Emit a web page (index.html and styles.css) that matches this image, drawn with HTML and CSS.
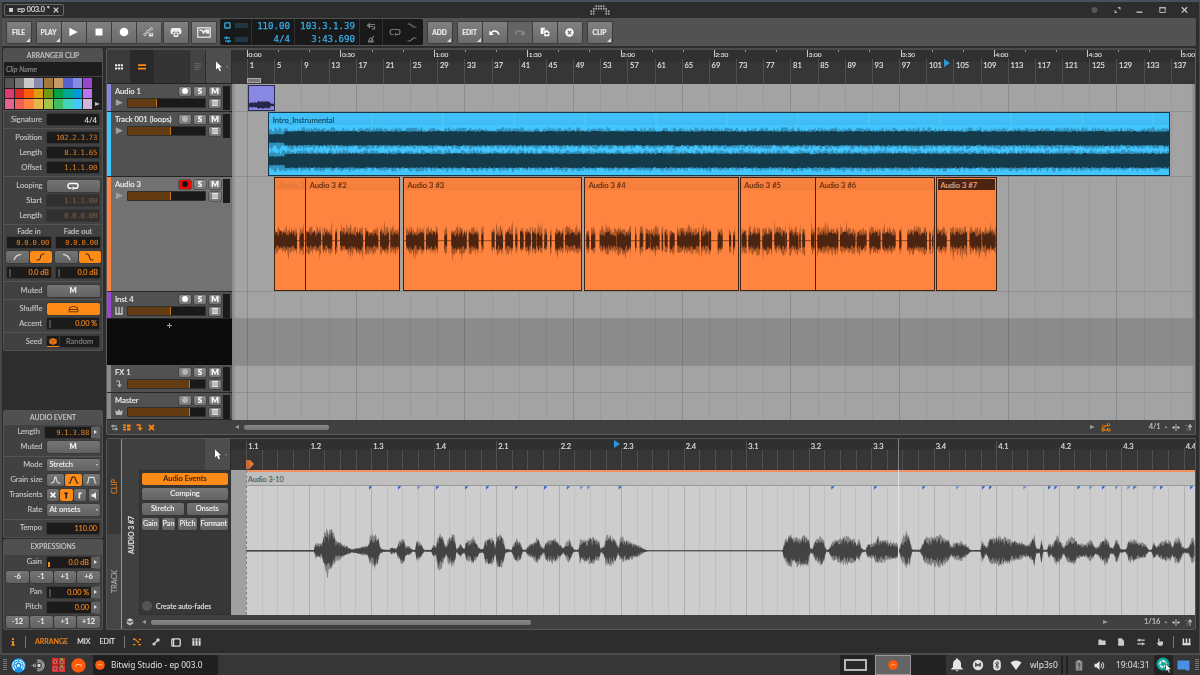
FILE: index.html
```html
<!DOCTYPE html>
<html lang="en">
<head>
<meta charset="utf-8">
<title>Bitwig Studio - ep 003.0</title>
<link rel="stylesheet" href="styles.css">
</head>
<body>
<div class="window">
  <header class="titlebar">
    <div class="tab"><i class="tab-dot"></i><span>ep 003.0 *</span><svg width="6" height="6" viewBox="0 0 6 6"><path d="M.7 .7L5.3 5.3M5.3 .7L.7 5.3" class="s-light"/></svg></div>
    <svg class="brand" width="20" height="10" viewBox="0 0 20 10" id="brand"></svg>
    <div class="win-buttons">
      <svg width="7" height="8" viewBox="0 0 7 8"><circle cx="3.5" cy="4" r="3" fill="#565656"/></svg>
      <svg width="7" height="8" viewBox="0 0 7 8"><path d="M3.3 1H6.5V4.2ZM.5 3.8V7H3.7Z" fill="#a8a8a8"/></svg>
      <svg width="7" height="8" viewBox="0 0 7 8"><path d="M.5 6.2H6.5" stroke="#b5b5b5" stroke-width="1.5"/></svg>
      <svg width="7" height="8" viewBox="0 0 7 8"><path d="M.8 1.5H6.2V6.5H.8Z" fill="none" stroke="#b5b5b5"/><path d="M.3 1.7H6.7" stroke="#b5b5b5" stroke-width="1.5"/></svg>
      <svg width="7" height="8" viewBox="0 0 7 8"><path d="M.8 1.2L6.2 6.6M6.2 1.2L.8 6.6" stroke="#c5c5c5" stroke-width="1.3"/></svg>
    </div>
  </header>

  <div class="toolbar">
    <div class="bgroup"><button class="tb menu">FILE</button></div>
    <div class="bgroup play-group">
      <button class="tb menu">PLAY</button>
      <button class="tb"><svg width="10" height="10" viewBox="0 0 10 10"><path d="M.3 .8L8.700 5L.3 9.200Z" fill="#fff"/></svg></button>
      <button class="tb"><svg width="8" height="8" viewBox="0 0 8 8"><path d="M.5 .5H7.5V7.5H.5Z" fill="#fff"/></svg></button>
      <button class="tb"><svg width="10" height="10" viewBox="0 0 10 10"><circle cx="5" cy="5" r="4.3" fill="#fff"/></svg></button>
      <button class="tb"><svg width="11" height="10" viewBox="0 0 11 10"><path d="M2 7L5 4.5L8 1.5" stroke="#ddd" fill="none"/><circle cx="8.3" cy="1.8" r="1.2" class="n-light"/><circle cx="4.8" cy="4.4" r="1.2" class="n-light"/><circle cx="1.9" cy="7.4" r="1.2" class="n-light"/><path d="M5.800 5.800H10.200V9.500H5.800Z" fill="#ddd"/><path d="M7.300 5.500V7.500M8.800 5.500V7.500" stroke="#666" stroke-width=".6"/></svg></button>
    </div>
    <div class="bgroup w26"><button class="tb"><svg width="12" height="11" viewBox="0 0 12 11"><path d="M.6 6V3Q.8 1 3 1H9Q11.200 1 11.400 3V6Q11.300 7 10 7H9V4.800H3V7H2Q.7 7 .6 6Z" fill="#eee"/><rect x="3.600" y="5.500" width="4.800" height="4.400" rx="1.200" fill="#eee"/><path d="M6 6.3V8.600M4.900 7.500H7.100" stroke="#666" stroke-width=".9"/></svg></button></div>
    <div class="bgroup w26 tight"><button class="tb"><svg width="14" height="11" viewBox="0 0 14 11"><rect x=".8" y=".8" width="12.400" height="9.400" fill="none" stroke="#eee" stroke-width="1.200"/><path d="M2.500 3.300H5L6.500 6L8 3.300H9V5.500M10 3H11.500V6H10Z" fill="none" stroke="#eee" stroke-width="1.500"/></svg></button></div>
    <div class="display">
      <div class="d-io">
        <svg width="7" height="7" viewBox="0 0 7 7"><rect x=".8" y=".8" width="5.200" height="5.200" rx=".6" fill="none" stroke="#2fa9e4" stroke-width="1.300"/></svg><i></i>
        <svg width="7" height="7" viewBox="0 0 7 7"><path d="M0 1.800H6M1 5.200H7M2.500 .3V3.300M4.600 3.700V6.700" fill="none" stroke="#2fa9e4" stroke-width="1.200"/></svg><i></i>
      </div>
      <div class="d-num d-tempo"><span>110.00</span><span>4/4</span></div>
      <div class="d-num d-pos"><span>103.3.1.39</span><span>3:43.690</span></div>
      <div class="d-sm">
        <svg width="10" height="8" viewBox="0 0 10 8"><path d="M.5 3.500L4 .5V6.500Z" fill="#7c7c7c"/><path d="M4 2.500H9M4 4.500H7M6 6.800H9M8.500 4V7.300" stroke="#7c7c7c" stroke-width="1.200" fill="none"/></svg>
        <svg width="8" height="8" viewBox="0 0 8 8"><path d="M1 7H6.500L5 3H3ZM4 5.500L7 .7" stroke="#7c7c7c" fill="none"/><path d="M1.300 5.500H6V7H1Z" fill="#7c7c7c"/></svg>
      </div>
      <div class="d-loop">
        <svg width="12" height="8" viewBox="0 0 12 8"><path d="M4.500 6.500H3Q1 6.500 1 4Q1 1.500 3 1.500H9Q11 1.500 11 4Q11 6.500 9 6.500H7" class="s-grey"/><path d="M6 4.600V8L8.300 6.300Z" fill="#777"/></svg>
        <div class="d-ramps">
          <svg width="10" height="5" viewBox="0 0 10 5"><path d="M.5 1H3L6.500 4H9.500" class="s-grey"/></svg>
          <svg width="10" height="5" viewBox="0 0 10 5"><path d="M.5 4H3L6.500 1H9.500" class="s-grey"/></svg>
        </div>
      </div>
    </div>
    <div class="bgroup add-group"><button class="tb menu">ADD</button></div>
    <div class="bgroup">
      <button class="tb menu">EDIT</button>
      <button class="tb"><svg width="11" height="7" viewBox="0 0 11 7"><path d="M10 5.500Q8.500 1.500 5 2Q3.300 2.300 2 4" fill="none" stroke="#fff" stroke-width="1.500"/><path d="M.3 1.500V6H4.800Z" fill="#fff"/></svg></button>
      <button class="tb off"><svg width="11" height="7" viewBox="0 0 11 7"><path d="M1 5.500Q2.500 1.500 6 2Q7.700 2.300 9 4" fill="none" stroke="#8a8a8a" stroke-width="1.300"/><path d="M10.700 1.500V6H6.200Z" fill="#8a8a8a"/></svg></button>
      <button class="tb"><svg width="10" height="10" viewBox="0 0 10 10"><path d="M.7 .7H5V2.500H3.500V7H.7Z" fill="#fff"/><path d="M4.200 3.300H7.500L9.400 5.200V9.300H4.200Z" fill="#fff"/><path d="M6.800 5V8.200M5.200 6.600H8.400" stroke="#666"/></svg></button>
      <button class="tb"><svg width="9" height="9" viewBox="0 0 9 9"><circle cx="4.500" cy="4.500" r="4.200" fill="#fff"/><path d="M2.700 2.700L6.300 6.300M6.300 2.700L2.700 6.300" stroke="#666" stroke-width="1.200"/></svg></button>
    </div>
    <div class="bgroup"><button class="tb menu">CLIP</button></div>
  </div>

  <main class="main">
    <aside class="inspector">
      <section class="card">
        <h2>ARRANGER CLIP</h2>
        <div class="clip-name">Clip Name</div>
        <div class="palette"><div class="swatches" id="swatches"></div><i class="tri"></i></div>
        <div class="sect"><div class="row"><label>Signature</label><b class="field white">4/4</b></div></div>
        <div class="sect">
          <div class="row"><label>Position</label><b class="field mono">102.2.3.73</b></div>
          <div class="row"><label>Length</label><b class="field mono">8.3.1.65</b></div>
          <div class="row"><label>Offset</label><b class="field mono">1.1.1.00</b></div>
        </div>
        <div class="sect">
          <div class="row"><label>Looping</label><b class="btn"><svg width="12" height="8" viewBox="0 0 12 8"><path d="M4.500 6.300H3Q1 6.300 1 4Q1 1.500 3 1.500H9Q11 1.500 11 4Q11 6.300 9 6.300H7" fill="none" stroke="#fff" stroke-width="1.400"/><path d="M5.500 4.300V8.200L8 6.300Z" fill="#fff"/></svg></b></div>
          <div class="row"><label>Start</label><b class="field mono dim">1.1.1.00</b></div>
          <div class="row"><label>Length</label><b class="field mono dim">0.0.0.00</b></div>
        </div>
        <div class="sect fades">
          <div class="fade">
            <span>Fade in</span><b class="field mono">0.0.0.00</b>
            <div class="seg"><b class="btn"><svg width="9" height="8" viewBox="0 0 9 8"><path d="M1 7Q3 1.500 8 1.300" class="s-light"/></svg></b><b class="btn on"><svg width="9" height="8" viewBox="0 0 9 8"><path d="M.5 7H2.500Q4 7 4.500 4T6.500 1H8.500" class="s-dark"/></svg></b></div>
            <b class="field knob">0.0 dB</b>
          </div>
          <div class="fade">
            <span>Fade out</span><b class="field mono">0.0.0.00</b>
            <div class="seg"><b class="btn"><svg width="9" height="8" viewBox="0 0 9 8"><path d="M1 1.300Q6 1.500 8 7" class="s-light"/></svg></b><b class="btn on"><svg width="9" height="8" viewBox="0 0 9 8"><path d="M.5 1H2.500Q4 1 4.500 4T6.500 7H8.500" class="s-dark"/></svg></b></div>
            <b class="field knob">0.0 dB</b>
          </div>
        </div>
        <div class="sect"><div class="row"><label>Muted</label><b class="btn heavy">M</b></div></div>
        <div class="sect">
          <div class="row"><label>Shuffle</label><b class="btn on"><svg width="11" height="8" viewBox="0 0 11 8"><path d="M1.500 2.500Q5.500 .2 9.500 2.500M1 4.500H10M1 6.800H10M1 4.500V6.800M10 4.500V6.800M1.500 2.500V4.500M9.500 2.500V4.500" fill="none" stroke="#5a3208" stroke-width=".9"/></svg></b></div>
          <div class="row"><label>Accent</label><b class="field knob">0.00 %</b></div>
        </div>
        <div class="sect last"><div class="row"><label>Seed</label><b class="field seed"><i><svg width="8" height="7" viewBox="0 0 8 7"><path d="M4 0L7.700 1.600V5.300L4 7L.3 5.300V1.600Z" fill="#e87a14"/><path d="M.6 1.800L4 3.200L7.400 1.800M4 3.200V6.700" stroke="#8d4608" stroke-width=".6" fill="none"/></svg></i><em>Random</em></b></div></div>
      </section>

      <section class="card second">
        <h2>AUDIO EVENT</h2>
        <div class="sect first">
          <div class="row"><label>Length</label><b class="field mono step long">9.1.3.88</b></div>
          <div class="row"><label>Muted</label><b class="btn heavy">M</b></div>
        </div>
        <div class="sect">
          <div class="row"><label>Mode</label><b class="btn select">Stretch</b></div>
          <div class="row"><label>Grain size</label><div class="seg wide">
            <b class="btn"><svg width="11" height="8" viewBox="0 0 11 8"><path d="M.5 7H2.500Q4.500 6 5 1H6Q6.500 6 8.500 7H10.500" class="s-light"/></svg></b>
            <b class="btn on"><svg width="11" height="8" viewBox="0 0 11 8"><path d="M.5 7H2Q4 1.500 4.500 1H6.500Q7 1.500 9 7H10.500" class="s-dark"/></svg></b>
            <b class="btn"><svg width="11" height="8" viewBox="0 0 11 8"><path d="M.5 7H1.800L3 1.300H8L9.200 7H10.500" class="s-light"/></svg></b></div></div>
          <div class="row"><label>Transients</label><div class="seg wide four">
            <b class="btn"><svg width="6" height="6" viewBox="0 0 6 6"><path d="M.6 .6L5.400 5.400M5.400 .6L.6 5.400" stroke="#fff" stroke-width="1.500"/></svg></b>
            <b class="btn on"><svg width="6" height="7" viewBox="0 0 6 7"><path d="M.7 .5H5.300L4 2.800V6.500H2.400V2.800Z" fill="#222"/></svg></b>
            <b class="btn"><svg width="5" height="7" viewBox="0 0 5 7"><path d="M.5 .5H4.500L2.200 2.800V6.500H.5Z" fill="#eee"/></svg></b>
            <b class="btn solo"><svg width="6" height="7" viewBox="0 0 6 7"><path d="M.5 2.300H2L5 .3V6.700L2 4.700H.5Z" fill="#eee"/></svg></b></div></div>
          <div class="row"><label>Rate</label><b class="btn select">At onsets</b></div>
        </div>
        <div class="sect"><div class="row"><label>Tempo</label><b class="field">110.00</b></div></div>
      </section>

      <section class="card third">
        <h2>EXPRESSIONS</h2>
        <div class="row"><label>Gain</label><b class="field step gain">0.0 dB</b></div>
        <div class="row"><div class="seg four-even"><b class="btn">-6</b><b class="btn">-1</b><b class="btn">+1</b><b class="btn">+6</b></div></div>
        <div class="row"><label>Pan</label><b class="field step knob">0.00 %</b></div>
        <div class="row"><label>Pitch</label><b class="field step">0.00</b></div>
        <div class="row"><div class="seg four-even"><b class="btn">-12</b><b class="btn">-1</b><b class="btn">+1</b><b class="btn">+12</b></div></div>
      </section>
    </aside>

    <div class="center">
      <section class="arranger">
        <div class="arr-top">
          <div class="arr-tools">
            <span class="t1"><svg width="8" height="6" viewBox="0 0 8 6"><path d="M0 1.200H8M0 4.600H8" stroke="#eee" stroke-width="2" stroke-dasharray="2.200 .7"/></svg></span>
            <span class="t2"><svg width="8" height="6" viewBox="0 0 8 6"><path d="M0 1.200H8M0 4.600H8" stroke="#ff8b17" stroke-width="1.800"/></svg></span>
            <span class="t3"></span>
            <span class="t4"><svg width="8" height="8" viewBox="0 0 8 8"><path d="M0 .7H7M0 2.700H7M0 4.700H7M0 6.700H5" stroke="#666"/></svg></span>
            <span class="t5"><svg width="8" height="11" viewBox="0 0 8 11"><path d="M1 .5V8.500L3 6.800L4.500 10.200L6 9.500L4.500 6.200H7Z" fill="#fff"/></svg><i></i></span>
          </div>
          <div class="ruler" id="arrRuler"></div>
        </div>
        <div class="arr-body">
          <div class="tracks" id="tracks"></div>
          <div class="timeline" id="timeline"></div>
        </div>
        <div class="arr-foot foot">
          <svg width="7" height="7" viewBox="0 0 7 7"><path d="M0 2H6M1 5H7M2 .6V3.400M5 3.600V6.400" stroke="#bbb" fill="none"/></svg>
          <svg width="8" height="7" viewBox="0 0 8 7"><path d="M0 1.200H3M0 3.500H3M0 5.800H3" stroke="#f58413" stroke-width="1.400"/><path d="M4 .5H7.500V6.500H4Z" fill="#f58413"/><path d="M4 3.500H8" stroke="#333" stroke-width=".6"/></svg>
          <svg width="7" height="7" viewBox="0 0 7 7"><path d="M.5 1H4V4" stroke="#f58413" stroke-width="1.400" fill="none"/><path d="M1.300 3.700H6.700L4 6.800Z" fill="#f58413"/></svg>
          <svg width="7" height="7" viewBox="0 0 7 7"><path d="M1 1L6 6M6 1L1 6" stroke="#f58413" stroke-width="1.800"/></svg>
          <i class="tri-l"></i><div class="scroll"><i class="thumb-a"></i></div><i class="tri grey"></i>
          <svg class="auto-ico" width="10" height="9" viewBox="0 0 10 9"><path d="M2 3.500H4L7 1.500M2 7H8M2 3.500V7M6 5L8 7" class="s-orange"/><circle cx="7.500" cy="1.800" r="1.200" class="n-orange"/><circle cx="2" cy="7" r="1.200" class="n-orange"/><circle cx="2.500" cy="3.500" r="1.200" class="n-orange"/><circle cx="8" cy="7" r="1.200" class="n-orange"/></svg>
          <span class="snap">4/1</span><i class="up"></i>
          <svg width="8" height="7" viewBox="0 0 8 7"><path d="M4 .3V6.700" class="s-grey2"/><path d="M0 3.500H3M5 3.500H8" class="s-grey2"/><path d="M1.300 1.700L3.300 3.500L1.300 5.300ZM6.700 1.700L4.700 3.500L6.700 5.300Z" fill="#bbb"/></svg>
          <svg class="foot-end" width="7" height="7" viewBox="0 0 7 7"><path d="M5 6.800V2" class="s-grey2"/><path d="M3 3L5 .2L7 3ZM.5 1.500H2M1.500 4.500H3M1.500 6.300H3" fill="#bbb" stroke="#bbb" stroke-width=".5"/></svg>
        </div>
      </section>

      <section class="editor">
        <nav class="vtabs"><span class="active">CLIP</span><span>TRACK</span></nav>
        <div class="ed-left">
          <div class="ed-top"><span class="t5"><svg width="8" height="11" viewBox="0 0 8 11"><path d="M1 .5V8.500L3 6.800L4.500 10.200L6 9.500L4.500 6.200H7Z" fill="#fff"/></svg><i></i></span></div>
          <div class="ed-mid">
            <div class="vname"><span>AUDIO 3 #7</span></div>
            <div class="ed-panel">
              <b class="btn on">Audio Events</b>
              <b class="btn">Comping</b>
              <div class="pair"><b class="btn">Stretch</b><b class="btn">Onsets</b></div>
              <div class="quad"><b class="btn">Gain</b><b class="btn">Pan</b><b class="btn">Pitch</b><b class="btn">Formant</b></div>
              <div class="autofade"><i></i>Create auto-fades</div>
            </div>
          </div>
        </div>
        <div class="ed-view">
          <div class="ruler ed-ruler" id="edRuler"></div>
          <div class="ed-canvas" id="edCanvas"></div>
        </div>
        <div class="ed-foot foot">
          <svg width="8" height="8" viewBox="0 0 8 8"><path d="M4 .3L7.500 2L4 3.700L.5 2Z" fill="#ccc"/><path d="M.7 3.200V5.600L4 7.500L7.300 5.600V3.200L4 5Z" fill="#bbb"/></svg>
          <i class="tri-l"></i><div class="scroll"><i class="thumb-b"></i></div><i class="tri grey"></i>
          <span class="snap">1/16</span><i class="up"></i>
          <svg width="8" height="7" viewBox="0 0 8 7"><path d="M4 .3V6.700" class="s-grey2"/><path d="M0 3.500H3M5 3.500H8" class="s-grey2"/><path d="M1.300 1.700L3.300 3.500L1.300 5.300ZM6.700 1.700L4.700 3.500L6.700 5.300Z" fill="#bbb"/></svg>
          <svg class="foot-end" width="7" height="7" viewBox="0 0 7 7"><path d="M5 6.800V2" class="s-grey2"/><path d="M3 3L5 .2L7 3ZM.5 1.500H2M1.500 4.500H3M1.500 6.300H3" fill="#bbb" stroke="#bbb" stroke-width=".5"/></svg>
        </div>
      </section>
    </div>
  </main>

  <footer class="status">
    <div class="st-l">
      <svg class="info" width="4" height="8" viewBox="0 0 4 8"><path d="M1 .3H3V2H1ZM.4 3H3V6.500H3.800V7.700H.3V6.500H1.200V4.200H.4Z" fill="#ff8b17"/></svg>
      <i class="bar"></i><span class="cur">ARRANGE</span><span>MIX</span><span>EDIT</span><i class="bar b2"></i>
      <svg width="8" height="8" viewBox="0 0 8 8"><path d="M0 1.200H2.500M4 4H6M0 6.600H2.500M6 1.500H8M5.500 6.600H8M2.500 2.500H4" stroke="#ff8b17" stroke-width="1.400"/></svg>
      <svg width="8" height="8" viewBox="0 0 8 8"><path d="M2 6L6 2" stroke="#ccc" stroke-width="1.300"/><circle cx="6" cy="2" r="1.700" fill="#ccc"/><circle cx="2" cy="6" r="1.600" fill="#ccc"/></svg>
      <svg width="10" height="9" viewBox="0 0 10 9"><rect x=".8" y=".8" width="8.400" height="7.400" rx="1" fill="none" stroke="#ddd" stroke-width="1.300"/><path d="M2.600 1V8" stroke="#ddd" stroke-width="1.200"/></svg>
      <svg width="9" height="8" viewBox="0 0 9 8"><path d="M1.400 .2V7.800M4.500 .2V7.800M7.600 .2V7.800" stroke="#ddd" stroke-width="2"/><path d="M0 2.300H9" stroke="#555" stroke-width=".5"/></svg>
    </div>
    <div class="st-r">
      <svg width="8" height="8" viewBox="0 0 8 8"><path d="M.4 1.500H3L3.800 2.500H7.600V7H.4Z" fill="#ccc"/></svg>
      <svg width="8" height="8" viewBox="0 0 8 8"><path d="M1.200 .3H4.500L7 2.800V7.700H1.200Z" fill="#ccc"/></svg>
      <svg width="8" height="8" viewBox="0 0 8 8"><path d="M.3 2.200H7.700M.3 5.800H7.700M2.300 .8V3.600M5.600 4.400V7.200" stroke="#ccc" stroke-width="1.300"/></svg>
      <svg width="8" height="8" viewBox="0 0 8 8"><path d="M2.200 .5H3.400V3.500H7V6L6 7.700H2.700L.5 4.500L2.200 5Z" fill="#ccc"/></svg>
      <i class="bar"></i>
      <svg width="9" height="8" viewBox="0 0 9 8"><path d="M1.400 .4V7M4.500 .4V7M7.600 .4V7" stroke="#ddd" stroke-width="1.500"/><path d="M.6 6.200H8.400" stroke="#ddd" stroke-width="2.200"/></svg>
    </div>
  </footer>
</div>

<div class="taskbar">
  <i class="grip"></i>
  <svg class="ti" width="15" height="15" viewBox="0 0 15 15"><circle cx="7.500" cy="7.500" r="7.200" fill="#1793e6"/><circle cx="7.500" cy="7.500" r="1.500" fill="#fff"/><path d="M5.500 10.500A3.600 3.600 0 1 1 10 10.200M3.800 12A5.700 5.700 0 1 1 11.500 11.700" fill="none" stroke="#fff" stroke-width="1.100" stroke-dasharray="4 .7"/></svg>
  <svg class="ti" width="15" height="15" viewBox="0 0 15 15"><circle cx="8" cy="7.500" r="1.700" fill="#ddd"/><path d="M6 4.700A3.500 3.500 0 1 1 6 10.300M6 2.500A5.300 5.300 0 1 1 6 12.500M4.300 5.500V9.500M2.600 6V9M1 7V8" fill="none" stroke="#aaa" stroke-width="1.100"/></svg>
  <svg class="ti red" width="13" height="14" viewBox="0 0 13 14"><path d="M0 0H13V14H0Z" fill="#d63434"/><path d="M6.500 0V14M0 7H13" stroke="#8e1c1c" stroke-width=".8"/><circle cx="3.300" cy="4" r="1.500" class="n-dk"/><circle cx="3.300" cy="10.500" r="1.500" class="n-dk"/><circle cx="9.700" cy="10.800" r="1.500" class="n-dk"/><circle cx="9.700" cy="4.200" r="1.500" class="n-dk"/><path d="M8.500 1.200H11M8.500 8H11" stroke="#52d03a" stroke-width="1.500"/></svg>
  <svg class="ti" width="15" height="15" viewBox="0 0 15 15"><circle cx="7.500" cy="7.500" r="7.200" fill="#ff5a0a"/><path d="M4.500 8.700V7.800Q5 6.500 6.500 6.500H8.500Q10 6.500 10.500 7.800V8.700" fill="none" stroke="#f5c3a4" stroke-width="1.100"/></svg>
  <div class="task"><svg width="10" height="10" viewBox="0 0 15 15"><circle cx="7.500" cy="7.500" r="7.200" fill="#ff5a0a"/><path d="M4.500 8.700V7.800Q5 6.500 6.500 6.500H8.500Q10 6.500 10.500 7.800V8.700" fill="none" stroke="#f5c3a4" stroke-width="1.300"/></svg><span>Bitwig Studio - ep 003.0</span></div>
  <div class="pager"><span><i class="miniwin"></i></span><span class="sel"><svg width="10" height="10" viewBox="0 0 15 15"><circle cx="7.500" cy="7.500" r="7.200" fill="#ff5a0a"/><path d="M4.500 8.700V7.800Q5 6.500 6.500 6.500H8.500Q10 6.500 10.500 7.800V8.700" fill="none" stroke="#f5c3a4" stroke-width="1.300"/></svg></span><span></span></div>
  <div class="tray">
    <svg width="14" height="14" viewBox="0 0 14 14"><path d="M7 .3Q8 .3 8 1.400Q11 2.500 11 6V9L13.300 11.500H.7L3 9V6Q3 2.500 6 1.400Q6 .3 7 .3ZM5.500 12.300H8.500L7 13.800Z" fill="#e6e6e6"/></svg>
    <svg width="12" height="12" viewBox="0 0 12 12"><circle cx="6" cy="6" r="5.200" fill="#e0e0e0"/><path d="M3.800 7.800V4.800L6 6.500L8.200 4.800V7.800" fill="none" stroke="#444" stroke-width="1.400"/></svg>
    <svg width="10" height="12" viewBox="0 0 10 12"><rect x="1.200" y=".5" width="7.600" height="11" rx="3.800" fill="#e0e0e0"/><path d="M3 4L7 7.700L5 9.500V2.500L7 4.300L3 8" fill="none" stroke="#444" stroke-width=".9"/></svg>
    <svg width="12" height="12" viewBox="0 0 12 12"><path d="M.5 3.500Q6 -.5 11.500 3.500L6 11Z" fill="#e6e6e6"/></svg>
    <span class="net">wlp3s0</span><i class="sep s1"></i><i class="sep"></i>
    <svg class="cb" width="8" height="11" viewBox="0 0 8 11"><path d="M.7 1.200H7.300V10.500H.7Z" fill="#8e8e8e"/><path d="M2.500 .2H5.500V2H2.500Z" fill="#aaa"/><path d="M2.800 4.300Q4 3 5 4.200Q5.200 5.200 4 6V7M4 8V9" stroke="#333" fill="none" stroke-width=".9"/></svg>
    <svg class="vol" width="11" height="11" viewBox="0 0 11 11"><path d="M.5 3.700H2.500L5.500 1V10L2.500 7.300H.5Z" fill="#e6e6e6"/><path d="M7 3.500Q8.300 5.500 7 7.500M8.500 2Q11 5.500 8.500 9" fill="none" stroke="#e6e6e6"/></svg>
    <span class="clock">19:04:31</span>
    <span class="teal"><svg width="17" height="18" viewBox="0 0 17 18"><circle cx="8" cy="8" r="6.500" fill="#10a89a"/><circle cx="8" cy="8" r="3" fill="none" stroke="#d9f2ef" stroke-width="2" stroke-dasharray="3.500 .8"/><path d="M10.500 7.500V15.500L12.400 13.900L13.800 17L15.200 16.400L13.800 13.400H16.500Z" fill="#fff" stroke="#222" stroke-width=".6"/></svg></span>
    <svg class="blue" width="13" height="11" viewBox="0 0 13 11"><path d="M.5 .5H12.500V10.500H9.500L8.500 9.500H.5Z" fill="#4a8fe2"/></svg>
    <i class="grip"></i>
  </div>
</div>
<script src="app.js"></script>
</body>
</html>
```
FILE: styles.css
```css
* { box-sizing: border-box; }
body { margin: 0; width: 1200px; height: 675px; overflow: hidden; background: #2d2d2d; font-family: Lato, "Open Sans", sans-serif; font-size: 7.500px; line-height: 1; color: #c8c8c8; -webkit-text-stroke: .15px; }
button { font: inherit; border: 0; padding: 0; margin: 0; color: inherit; }
svg { display: block; flex: none; }
i, em { font-style: normal; }
h2 { margin: 0; }
.window { height: 655px; display: flex; flex-direction: column; border-top: 2px solid #48525c; border-left: 2px solid #484848; border-right: 1px solid #484848; border-bottom: 2px solid #4e4e4e; background: #2d2d2d; }

.s-light { fill: none; stroke: #ddd; stroke-width: 1.200; }
.s-dark { fill: none; stroke: #3a2610; stroke-width: 1.100; }
.s-grey { fill: none; stroke: #777; stroke-width: 1.200; }
.s-grey2 { fill: none; stroke: #bbb; stroke-width: 1; }
.s-orange { fill: none; stroke: #f58413; stroke-width: 1; }
.n-orange { fill: #3a2a1a; stroke: #f58413; stroke-width: 1; }
.n-light { fill: #6b6b6b; stroke: #ddd; stroke-width: .9; }
.n-dk { fill: #7c2020; stroke: #e09a9a; stroke-width: .7; }

/* title bar */
.titlebar { height: 16px; flex: none; display: flex; justify-content: space-between; padding: 2px 11px 0 2px; }
.tab { width: 60px; height: 12px; border: 1px solid #666; border-radius: 2px; display: flex; align-items: center; justify-content: space-between; padding: 0 4px; color: #e2e2e2; background: #2b2b2b; }
.tab span { font-size: 7.100px; white-space: nowrap; margin-left: 1px; }
.tab-dot { width: 4px; height: 4px; background: #ccc; }
.brand { margin: 1px 0 0 45px; }
.win-buttons { display: flex; gap: 15.500px; align-items: center; margin-top: -2px; }

/* toolbar */
.toolbar { height: 28px; flex: none; background: #525252; display: flex; align-items: center; padding-left: 3.500px; margin-right: 3px; }
.bgroup { display: flex; height: 23px; margin-right: 4px; border: 1px solid #3c3c3c; border-radius: 2px; background: #3c3c3c; gap: 1px; }
.tb { width: 24px; height: 21px; display: flex; align-items: center; justify-content: center; background: linear-gradient(#808080, #6a6a6a); color: #eee; font-weight: 700; font-size: 6.600px; position: relative; }
.tb.off { background: #646464; }
.tb.menu::after { content: ""; position: absolute; right: 1px; bottom: 1px; border-left: 4px solid transparent; border-bottom: 4px solid #ddd; }
.play-group { margin-right: 1px; }
.w26 { width: 26px; margin-right: 2px; }
.w26.tight { margin-right: 3px; }
.display { height: 26px; width: 203px; display: flex; background: #191919; border-radius: 2px; color: #36aee9; margin-right: 4px; }
.display > div { border-right: 1px solid #303030; height: 100%; }
.display > div:last-child { border: 0; }
.d-io { width: 32px; display: grid; grid-template-columns: 7px 13px; gap: 7px 4px; align-content: center; padding-left: 4px; }
.d-io i { height: 5px; background: #203642; margin-top: 1px; }
.d-num { display: flex; flex-direction: column; align-items: flex-end; justify-content: space-around; font: 9.100px/12px "DejaVu Sans Mono", monospace; padding: 1px 3.500px 0 0; -webkit-text-stroke: .25px; }
.d-tempo { width: 43px; }
.d-pos { width: 65px; }
.d-sm { width: 23px; display: flex; flex-direction: column; justify-content: space-around; align-items: center; }
.d-loop { flex: 1; display: flex; align-items: center; justify-content: space-between; padding: 0 6px 0 6px; }
.d-ramps { display: flex; flex-direction: column; gap: 9px; }

/* layout */
.main { height: 582px; margin-top: 2px; display: flex; gap: 3px; padding-left: 1px; }
.inspector { width: 100px; display: flex; flex-direction: column; }
.center { width: 1090px; display: flex; flex-direction: column; gap: 3px; }

/* inspector */
.card { background: #414141; border: 1px solid #515151; border-radius: 2px; overflow: hidden; flex: none; height: 303px; }
.card h2 { height: 13px; background: #505050; font-size: 6.900px; font-weight: 400; line-height: 13px; text-align: center; color: #c8c8c8; }
.clip-name { height: 14px; background: #1d1d1d; color: #8a8a8a; font-style: italic; font-size: 7.200px; line-height: 15px; padding-left: 2px; }
.palette { display: flex; align-items: flex-end; height: 33px; background: #1e1e1e; padding: 1px 2px 1px 1px; justify-content: space-between; margin-top: 1px; }
.palette .tri { margin-bottom: 3px; }
.swatches { display: grid; grid-template-columns: repeat(9, 1fr); grid-template-rows: repeat(3, 1fr); gap: .6px; width: 87px; height: 31px; }
.tri { width: 0; height: 0; border: 2.500px solid transparent; border-left: 5px solid #bbb; border-right: 0; flex: none; }
.tri.grey { border-left-color: #999; }
.tri-l { width: 0; height: 0; border: 2.500px solid transparent; border-right: 4.500px solid #999; border-left: 0; flex: none; }
.sect { border-top: 1px solid #545454; padding: 1px 0; }
.sect.first { border: 0; padding-top: 0; }
.row { height: 15px; display: flex; align-items: center; padding: 0 2px; gap: 4px; }
.row label { flex: 1; text-align: right; color: #c2c2c2; font-size: 7.500px; }
.field { width: 54px; height: 13px; background: #1b1b1b; border: 1px solid #363636; border-radius: 2px; color: #f08018; font-weight: 400; font-size: 7.200px; line-height: 12px; text-align: right; padding-right: 2px; position: relative; display: block; }
.field.white { color: #ddd; font-size: 7.800px; }
.field.mono { font-family: "DejaVu Sans Mono", monospace; font-size: 7.200px; letter-spacing: -.22px; -webkit-text-stroke: 0; }
.field.dim { background: #303030; color: #8c5c34; }
.field.knob::before { content: ""; position: absolute; left: 2px; top: 2px; width: 1.500px; height: 8px; background: #4c4c4c; }
.field.gain::before { content: ""; position: absolute; left: 1px; top: 5px; width: 2px; height: 5px; background: #ff8b17; }
.field.step { border-right: 9px solid #606060; padding-right: 2px; }
.field.step::after { content: ""; position: absolute; right: -6px; top: 3px; border: 2.500px solid transparent; border-left: 3.500px solid #ddd; border-right: 0; }
.field.long { width: 56px; }
.btn { height: 12px; width: 53px; display: flex; align-items: center; justify-content: center; background: linear-gradient(#757575, #626262); border-radius: 2px; color: #f0f0f0; font-weight: 400; font-size: 7.500px; box-shadow: 0 0 0 .5px #333; }
.btn.on { background: #ff8b17; color: #2d1a08; }
.btn.heavy { font-weight: 900; }
.btn.select { justify-content: flex-start; padding-left: 3px; position: relative; }
.btn.select::after { content: ""; position: absolute; right: 1.500px; top: 5px; border: 1.500px solid transparent; border-top: 2px solid #ddd; border-bottom: 0; }
.row > .btn { margin-right: .5px; }
.sect.fades { display: flex; padding: 0 2px; height: 57px; gap: 3px; }
.fade { width: 46px; display: flex; flex-direction: column; }
.fade > span { text-align: center; height: 11px; line-height: 13px; color: #c2c2c2; }
.fade .field { width: 46px; }
.fade .seg { margin: 2px 0 3px; }
.seg { display: flex; gap: 1px; }
.seg .btn { flex: 1; width: auto; }
.seg.wide { width: 53px; margin-right: .5px; }
.seg.four .solo { margin-left: 2px; flex: .8; }
.seg.four-even { width: 94px; }
.seed { display: flex; padding: 0; }
.seed i { width: 12px; display: flex; align-items: center; justify-content: center; border-bottom: 1px solid #ff8b17; }
.seed em { flex: 1; text-align: center; color: #808080; border-left: 1px solid #363636; font-size: 7.500px; }
.card.second { margin-top: 58.500px; height: 128px; }
.card.second h2 { height: 14px; line-height: 12px; }
.card.third { margin-top: 1.500px; height: 91px; }
.card.third h2 { height: 14.500px; line-height: 13px; }

/* arranger */
.arranger { height: 387px; border: 1px solid #5c5c5c; border-top: 2px solid #4c4c4c; border-radius: 2px; background: #404040; overflow: hidden; flex: none; }
.arr-top { height: 34px; display: flex; }
.arr-tools { width: 125px; flex: none; display: flex; background: #343434; border-bottom: 1px solid #222; }
.arr-tools span, .t5 { display: flex; align-items: center; justify-content: center; border-right: 1px solid #2c2c2c; }
.arr-tools .t1 { width: 24px; background: #3a3a3a; }
.arr-tools .t2 { width: 23px; background: #292929; }
.arr-tools .t3 { width: 36px; }
.arr-tools .t4 { width: 16px; background: #434343; }
.t5 { width: 26px; background: #4d4d4d; gap: 3px; padding-left: 5px; }
.t5 i { border: 1.500px solid transparent; border-top: 2px solid #888; border-bottom: 0; }
.ruler { flex: 1; position: relative; background: linear-gradient(#303030 0 35%, #363636 35%); overflow: hidden; color: #ddd; }
.ruler i, .timeline i, .ed-canvas i { position: absolute; }
.ruler span { position: absolute; white-space: nowrap; }
.ruler .bl { width: 1px; top: 9px; bottom: 0; background: #505050; }
.ruler .tl { width: 1px; top: 0; height: 7px; background: #c8c8c8; }
.ruler .tk { width: 1px; top: 0; height: 2px; background: #999; }
.ruler .bn { top: 12px; font-size: 7.500px; -webkit-text-stroke: .2px; }
.ruler .tn { top: 2px; font-size: 6.500px; }
.ruler .cue { border: 4px solid transparent; border-left: 6px solid #2a98d8; border-right: 0; }
.loopbar { left: 15px; top: 28px; width: 14px; height: 5px; background: #777; border: 1px solid #aaa; }
.arr-body { height: 336px; display: flex; }
.tracks { width: 125px; flex: none; display: flex; flex-direction: column; background: #0d0d0d; }
.track { display: flex; background: #515151; border-bottom: 1px solid #262626; flex: none; }
.track.sel { background: #727272; }
.track.add { background: #0b0b0b; justify-content: center; padding-top: 3px; border: 0; }
.strip { width: 4px; margin-right: 4px; flex: none; }
.tcol { width: 106px; flex: none; padding-top: 2.400px; }
.trow { height: 10px; display: flex; align-items: center; margin-bottom: 2px; color: #f0f0f0; gap: 3px; }
.trow .nm { flex: 1; font-size: 7.600px; white-space: nowrap; }
.chip { width: 12px; height: 9.500px; border-radius: 2px; background: linear-gradient(#8c8c8c, #767676); display: flex; align-items: center; justify-content: center; font-size: 8px; font-weight: 900; color: #fff; box-shadow: 0 0 0 .6px #3a3a3a; flex: none; }
.chip.armed { background: #f00808; }
.trow .ico { width: 9px; flex: none; display: flex; justify-content: flex-start; }
.volume { width: 79px; height: 10px; border: 1px solid #303030; border-radius: 1px; background: #191919; flex: none; }
.volume i { display: block; height: 100%; background: #643c14; border-right: 1.500px solid #c8701c; }
.meter { width: 7px; height: 24px; margin: 2px 0 0 2px; background: #1b1b1b; }
.timeline { flex: 1; position: relative; background: #a3a3a3; overflow: hidden; }
.timeline .h { left: 0; right: 0; height: 1px; background: #8f8f8f; }
.timeline .void { left: 0; right: 0; background: #8b8b8b; }
.timeline .v { top: 0; bottom: 0; width: 1px; mix-blend-mode: multiply; background: #f0f0f0; }
.timeline .v.maj { background: #dadada; }
.timeline .shade { top: 0; bottom: 0; left: 0; width: 4px; background: linear-gradient(90deg, #858585, transparent); }
.timeline .shade.r { left: auto; right: 0; background: linear-gradient(270deg, #858585, transparent); }
.clip { position: absolute; overflow: hidden; border: 1px solid #40210f; }
.clip svg { position: absolute; left: 0; top: 0; }
.clip .cn { position: relative; display: block; height: 12px; line-height: 14px; padding-left: 3.500px; font-size: 7.600px; white-space: nowrap; background: linear-gradient(rgba(0,0,0,.02), rgba(0,0,0,.05)); }
.clip.violet { background: #8888e2; border-color: #2c2c50; }
.clip.blue { background: #43c5ff; border-color: #12384a; color: #0f4a66; }
.clip.orange { background: #ff843f; color: #602c10; }
.clip.orange.picked { padding: 1px; }
.clip.picked .cn { background: #4b2411; color: #f0a880; height: 11px; line-height: 12px; padding-left: 2px; }
.clip .faint { opacity: .12; }

.foot { display: flex; align-items: center; background: #404040; }
.arr-foot { height: 14px; padding: 0 3px 0 4px; gap: 5.100px; }
.arr-foot .tri-l { margin-left: 75px; }
.scroll { flex: 1; height: 5px; }
.scroll i { display: block; height: 5px; border-radius: 2px; background: linear-gradient(#8a8a8a, #747474); }
.thumb-a { width: 85px; }
.thumb-b { width: 380px; }
.arr-foot .auto-ico { margin: 0 0 0 1px; }
.snap { font-size: 7.500px; color: #c4c4c4; width: 47px; text-align: right; }
.arr-foot .snap { width: 45px; }
.up { border: 1.500px solid transparent; border-bottom: 2px solid #bbb; border-top: 0; margin-left: -1px; }

/* clip editor */
.editor { height: 192px; border: 1px solid #565656; border-radius: 2px; background: #404040; display: grid; grid-template-columns: 14px 110px 1fr; grid-template-rows: 176px 14px; overflow: hidden; }
.vtabs { grid-row: 1 / 3; display: flex; flex-direction: column; background: #454545; }
.vtabs span { flex: 1; display: flex; align-items: center; justify-content: center; writing-mode: vertical-rl; transform: rotate(180deg); font-size: 7.200px; color: #aaa; padding-right: 1px; }
.vtabs .active { background: #373737; color: #e87c22; }
.ed-left { border-left: 1.500px solid #f07c3c; display: flex; flex-direction: column; }
.ed-top { height: 31px; display: flex; justify-content: flex-end; }
.ed-mid { flex: 1; display: flex; }
.vname { width: 17px; display: flex; align-items: center; justify-content: center; padding: 0 0 15px 1px; }
.vname span { writing-mode: vertical-rl; transform: rotate(180deg); font-size: 6.900px; font-weight: 700; color: #ddd; white-space: nowrap; }
.ed-panel { flex: 1; background: #373737; padding: 2px 2px 3px; display: flex; flex-direction: column; gap: 3.200px; border: 1px solid #303030; }
.ed-panel > .btn { width: 86px; flex: none; }
.ed-panel .btn { height: 11.800px; }
.pair, .quad { display: flex; gap: 3px; width: 86px; }
.pair .btn { flex: 1; }
.quad .btn { width: auto; flex: 1 1 auto; font-size: 7.200px; }
.autofade { margin-top: auto; display: flex; align-items: center; gap: 4px; color: #e0e0e0; font-size: 7px; white-space: nowrap; }
.autofade i { width: 10px; height: 10px; border-radius: 50%; background: #555; flex: none; }
.ed-view { display: flex; flex-direction: column; overflow: hidden; }
.ed-ruler { flex: none; height: 31px; }
.ed-ruler .bn { top: 4px; font-size: 7.500px; }
.ed-ruler .flag { left: 18.500px; top: 21px; border: 4.500px solid transparent; border-left: 4px solid #f07c3c; border-right: 0; }
.ed-ruler .flag-b { left: 14.500px; top: 21px; width: 4px; height: 9px; background: #c86a38; }
.ed-canvas { flex: 1; position: relative; background: #a0a0a0; overflow: hidden; }
.event { position: absolute; left: 15px; right: 0; top: 0; bottom: 0; background: #cdcdcd; }
.event-name { height: 16px; border-top: 2.500px solid #f09060; border-bottom: 1px solid #999; background: #bfbfbf; color: #565656; line-height: 15px; padding-left: 2px; font-size: 7.200px; }
.event svg { position: absolute; left: 0; top: 16px; }
.event .v { top: 16px; bottom: 0; width: 1px; background: #c1c1c1; }
.event .v.maj { background: #aeaeae; }
.event .edge { left: 0; top: 0; bottom: 0; border-left: 1px dashed #808080; }
.playline { width: 1px; top: 0; bottom: 0; background: #e0e0e0; }
.ed-ruler .playline { background: #808080; }
.ed-foot { grid-column: 2 / 4; border-left: 1.500px solid #f07c3c; padding: 0 3px 0 4px; gap: 5.200px; }
.ed-foot .tri-l { margin-left: 3px; }

/* status bar */
.status { height: 23px; display: flex; justify-content: space-between; align-items: center; padding: 1px 5px 0 9px; font-size: 7.100px; color: #e0e0e0; }
.st-l, .st-r { display: flex; align-items: center; }
.bar { width: 1px; height: 12px; background: #777; margin: 0 10px; }
.st-l .cur { color: #ff8b17; margin-left: -1px; }
.st-l span + span { margin-left: 9px; }
.st-l svg + svg { margin-left: 11px; }
.st-l .b2 { margin: 0 8.500px; }
.st-r { gap: 11.500px; }
.st-r .bar { margin: 0 -3px; }
.st-r svg:last-child { margin-right: 3px; }

/* desktop panel */
.taskbar { height: 20px; background: #363636; display: flex; align-items: center; padding-left: 3px; font-family: "Noto Sans", "Open Sans", sans-serif; color: #e0e0e0; -webkit-text-stroke: 0; }
.grip { width: 4px; height: 12px; background: repeating-linear-gradient(#777 0 1px, transparent 1px 2px); margin-right: 4px; flex: none; }
.ti { margin-right: 5px; }
.ti.red { margin: 0 6px 0 1px; }
.task { height: 20px; width: 125px; margin-left: 2px; background: #1f1f1f; border-radius: 2px; display: flex; align-items: center; padding-left: 2px; gap: 6px; font-size: 8.300px; white-space: nowrap; flex: none; }
.pager { display: flex; height: 20px; margin-left: 622px; background: #232323; flex: none; }
.pager span { width: 35.300px; display: flex; align-items: center; justify-content: center; }
.pager .sel { background: #646464; border: 1px solid #999; }
.miniwin { width: 23px; height: 12px; border: 2px solid #b8b8b8; background: #292929; margin-left: -5px; }
.tray { display: flex; align-items: center; height: 20px; padding-left: 4px; font-size: 8.500px; gap: 8px; flex: none; }
.sep { width: 2px; height: 18px; background: #222; margin-right: -5px; }
.sep.s1 { margin-left: -5px; }
.tray .cb { margin-left: 4px; }
.tray .vol { margin-left: 3px; }
.tray .clock { margin-left: 3px; }
.teal { width: 19px; height: 20px; background: #232323; border-radius: 2px; display: flex; align-items: center; justify-content: center; margin-left: -4px; }
.tray .blue { margin-left: -4px; }
.tray .grip { margin: 0 0 0 -3px; }
```
FILE: app.js
```js
const $ = id => document.getElementById(id);
let seed = 7;
const rnd = () => (seed = (seed * 16807) % 2147483647) / 2147483647;

/* logo dots */
const dots = [[0, 2], [0, 3], [1, 1], [1, 2], [1, 3], [2, 0], [2, 1], [3, 0], [3, 1], [4, 0], [4, 1], [5, 0], [5, 1], [6, 1], [6, 2], [6, 3], [7, 2], [7, 3]];
$('brand').innerHTML = '<g fill="#aaa">' + dots.map(([a, b]) => `<circle cx="${1.2 + a * 2.5}" cy="${1.2 + b * 2.5}" r=".95"/>`).join('') + '</g>';

/* colour palette */
const colors = ['#555', '#777', '#cacaca', '#8a8ab0', '#a4773c', '#c79a6b', '#5762cf', '#868be6', '#9748cf',
  '#dd3a76', '#da2c25', '#ff5b0a', '#dc9d10', '#739a15', '#009f48', '#00a795', '#0098dc', '#bd72f2',
  '#e56393', '#ee6158', '#ff843f', '#e5b74d', '#a0c34b', '#3ebd62', '#44d4bb', '#43c7ff', '#d0b5dc'];
$('swatches').innerHTML = colors.map(c => `<i style="background:${c}"></i>`).join('');

/* arranger ruler */
const X0 = 15.1, BAR4 = 27.165, SEC30 = 93.35;
let h = '';
for (let n = 0; n < 35; n++) {
  const x = X0 + n * BAR4;
  h += `<i class="bl" style="left:${x}px"></i><span class="bn" style="left:${x + 2.7}px">${1 + n * 4}</span>`;
}
for (let n = 0; n <= 30; n++) {
  const x = X0 + n * SEC30 / 3;
  if (n % 3) h += `<i class="tk" style="left:${x}px"></i>`;
  else h += `<i class="tl" style="left:${x}px"></i><span class="tn" style="left:${x + 1.5}px">${Math.floor(n / 6)}:${n % 6 ? '30' : '00'}</span>`;
}
h += '<i class="cue" style="left:712px;top:9px"></i><i class="loopbar"></i>';
$('arrRuler').innerHTML = h;

/* track headers */
const arrow = '<svg width="8" height="8" viewBox="0 0 8 8"><path d="M.8 .3L8 3.700L.8 7Z" fill="#a0a0a0"/></svg>';
const keys = '<svg width="8" height="8" viewBox="0 0 8 8"><path d="M1 0V7M4 0V7M7 0V7" stroke="#ccc" stroke-width="1.300"/><path d="M.3 7H7.700" stroke="#ccc" stroke-width="1.600"/></svg>';
const ret = '<svg width="8" height="8" viewBox="0 0 8 8"><path d="M1 1H4.500V5" stroke="#bbb" fill="none"/><path d="M2 4.500H7L4.500 7.500Z" fill="#bbb"/></svg>';
const crown = '<svg width="8" height="8" viewBox="0 0 8 8"><path d="M.3 2L2.500 3.500L4 1L5.500 3.500L7.700 2L7 7H1Z" fill="#bbb"/></svg>';
const tracks = [
  { n: 'Audio 1', c: '#8888e2', h: 28, v: 29, ico: arrow, rec: '#fff' },
  { n: 'Track 001 (loops)', c: '#43c5ff', h: 65, v: 43, ico: arrow, rec: '#b5b5b5' },
  { n: 'Audio 3', c: '#ff843f', h: 115, v: 43, ico: arrow, rec: '#111', armed: 1 },
  { n: 'Inst 4', c: '#9748cf', h: 27, v: 43, ico: keys, rec: '#fff' },
  { add: 1, h: 46 },
  { n: 'FX 1', c: '#8a8a8a', h: 28, v: 62, ico: ret, rec: '#b5b5b5' },
  { n: 'Master', c: '#8a8a8a', h: 27, v: 62, ico: crown, rec: '#b5b5b5' }
];
const lines = '<svg width="6" height="6" viewBox="0 0 6 6"><path d="M0 .8H6M0 3H6M0 5.200H6" stroke="#fff" stroke-width="1.200"/></svg>';
$('tracks').innerHTML = tracks.map(t => t.add
  ? `<div class="track add" style="height:${t.h}px"><svg width="7" height="7" viewBox="0 0 7 7"><path d="M3.500 1V6M1 3.500H6" stroke="#aaa"/></svg></div>`
  : `<div class="track${t.armed ? ' sel' : ''}" style="height:${t.h}px"><i class="strip" style="background:${t.c}"></i><div class="tcol">
  <div class="trow"><span class="nm">${t.n}</span><b class="chip${t.armed ? ' armed' : ''}"><svg width="6" height="6" viewBox="0 0 6 6"><circle cx="3" cy="3" r="2.900" fill="${t.rec}"/></svg></b><b class="chip">S</b><b class="chip">M</b></div>
  <div class="trow"><span class="ico">${t.ico}</span><div class="volume"><i style="width:${t.v}px"></i></div><b class="chip">${lines}</b></div></div><i class="meter"></i></div>`).join('');

/* waveform outline from an amplitude function */
function wave(x1, x2, step, mid, up, down) {
  let a = '', b = '';
  for (let x = x1; x <= x2; x += step) {
    const u = up(x), d = down(x);
    a += `L${x.toFixed(1)} ${(mid - u).toFixed(1)}`;
    b = `L${x.toFixed(1)} ${(mid + d).toFixed(1)}` + b;
  }
  return 'M' + a.slice(1) + b + 'Z';
}

/* timeline */
h = '<i class="void" style="top:235px;height:46px"></i>';
for (let n = 0; n < 35; n++) h += `<i class="v${n % 4 ? '' : ' maj'}" style="left:${X0 + n * BAR4}px"></i>`;
[27, 92, 207, 234, 281, 308].forEach(y => h += `<i class="h" style="top:${y}px"></i>`);
h += '<i class="shade"></i><i class="shade r"></i>';

const L = 232;
function clip(x1, x2, y1, y2, cls, name, svg) {
  h += `<div class="clip ${cls}" style="left:${x1 - L}px;top:${y1 - 84}px;width:${x2 - x1}px;height:${y2 - y1}px"><svg width="${x2 - x1}" height="${y2 - y1}">${svg}</svg>${name}</div>`;
}
const amp0 = x => x < 9 ? 3 : x < 21 ? 4.5 : 1.5;
clip(247.6, 274.8, 84.5, 111.3, 'violet', '', `<path fill="#26264a" d="${wave(0, 26, .7, 19, x => amp0(x) * (.5 + rnd() * .5), x => amp0(x) * (.5 + rnd() * .5))}"/>`);

let b = '';
[25.4, 47.7].forEach(m => {
  const core = x => x < 16 ? 3.8 + rnd() : 6.3 + rnd() * 1.5;
  const outer = () => 6.5 + rnd() * 5;
  b += `<path fill="#17455a" opacity=".4" d="${wave(0, 901, 1, m, outer, outer)}"/><path fill="#153b4b" d="${wave(0, 901, .8, m, core, core)}"/>`;
});
for (let x = 103; x < 890; x += 71) b += `<path d="M${x} 1V12" stroke="#7cd5fb" stroke-width=".6"/>`;
clip(268.3, 1170, 112.3, 176.3, 'blue', '<span class="cn">Intro_Instrumental</span>', b);

const voice = [
  [240, [103, 170, 178, 190, 200, 243, 248, 278, 286, 292, 301, 370, 376, 416, 421, 448, 452, 478, 498, 552, 558, 594, 613, 622, 634, 681, 686, 716, 724, 730, 755, 764, 768, 788, 796, 818, 826, 832, 840, 850, 856, 872, 876, 888, 890, 906, 913, 922, 930, 935, 945, 970, 975, 1022, 1040, 1048, 1054, 1066, 1080, 1130, 1132, 1174, 1186, 1190]],
  [640, [0, 10, 18, 30, 32, 60, 66, 70, 75, 84, 90, 105, 112, 180, 184, 206, 208, 215, 234, 248, 268, 275, 280, 287, 304, 318, 324, 360, 366, 395, 402, 435, 436, 440, 447, 474, 477, 482, 486, 494, 512, 522, 532, 594, 600, 646, 650, 680, 688, 722, 727, 767, 778, 784, 802, 860, 868, 872, 876, 881]],
  [930, [22, 52, 62, 112, 120, 156, 158, 197]]
];
const segs = [];
voice.forEach(([o, a]) => { for (let i = 0; i < a.length; i += 2) segs.push([o + a[i] / 3, o + a[i + 1] / 3]); });
function voiceSvg(x1, x2) {
  const mid = 62.700;
  let s = `<path d="M0 ${mid}H${x2 - x1}" stroke="#6b3317" stroke-width=".8"/>`;
  segs.filter(g => g[0] >= x1 - 1 && g[1] <= x2 + 1).forEach(g => {
    const o = () => 7 + rnd() * 8 + (rnd() > .94 ? 6 : 0), c = () => 4 + rnd() * 6;
    s += `<path fill="#5a2a12" opacity=".5" d="${wave(g[0] - x1 - 1, g[1] - x1 - .6, .7, mid, o, o)}"/><path fill="#4c2512" d="${wave(g[0] - x1 - 1, g[1] - x1 - .6, .7, mid, c, c)}"/>`;
  });
  return s;
}
[[273.7, 306, '<span class="cn"><span class="faint">Audio 3</span></span>'], [305.3, 400, 'Audio 3 #2'], [403, 582.3, 'Audio 3 #3'], [584.3, 738.7, 'Audio 3 #4'], [739.7, 816, 'Audio 3 #5'], [815, 934.7, 'Audio 3 #6'], [936.4, 997, 'Audio 3 #7', 'picked']]
  .forEach(([a, z, n, c]) => clip(a, z, 177.3, 291.5, 'orange ' + (c || ''), n[0] === '<' ? n : `<span class="cn">${n}</span>`, voiceSvg(a, z)));
$('timeline').innerHTML = h;

/* editor ruler */
const E0 = 15.2, BEAT = 62.5;
h = '';
for (let n = 0; n < 61; n++) {
  const x = E0 + n * BEAT / 4, top = n % 16 === 0 ? 2 : n % 4 === 0 ? 9 : 11;
  h += `<i class="bl" style="left:${x}px;top:${top}px"></i>`;
  if (n % 4 === 0) h += `<span class="bn" style="left:${x + 2}px">${1 + Math.floor(n / 16)}.${1 + n / 4 % 4}</span>`;
}
h += '<i class="cue" style="left:383px;top:1px"></i><i class="flag-b"></i><i class="flag"></i><i class="playline" style="left:667px"></i>';
$('edRuler').innerHTML = h;

/* editor waveform: x offset, then [x, up, down] thirds of a pixel along x */
const env = [
  [240, [[19, .7], [223, .7], [225, 6], [245, 6], [252, 14], [262, 18, 22], [275, 17, 15], [290, 9], [300, 7], [320, 4], [335, 1.5], [360, 3], [385, 5], [390, 12], [402, 14, 15], [415, 11], [420, 3], [430, 1], [450, 1], [453, 3], [470, 2], [475, 7], [490, 12, 13], [497, 4], [510, 4], [516, 1], [526, 1], [530, 9], [540, 7], [545, 5], [552, 1], [574, 1], [580, 6], [588, 4], [592, 12, 14], [600, 14, 16], [612, 10], [618, 3], [625, 11], [636, 16, 13], [644, 12], [650, 1], [662, 6], [668, 3], [674, 2], [678, 8], [700, 11], [712, 6], [718, 2], [730, 2], [736, 10], [750, 12, 13], [762, 9], [766, 2], [769, 14, 12], [780, 17, 16], [790, 10], [797, 2], [815, 1], [820, 6], [832, 10], [843, 7], [848, 1], [858, 1], [862, 4], [875, 6], [892, 12, 11], [905, 4], [912, 2], [916, 7], [930, 10], [945, 10], [959, 6]]],
  [560, [[0, 6], [10, 2], [18, 7], [27, 10], [37, 4], [42, 1], [56, 1], [60, 12], [66, 8], [85, 10], [95, 12], [118, 8], [122, 2], [130, 3], [138, 12], [150, 13, 12], [165, 11], [175, 3], [180, 12, 8], [200, 9], [225, 6], [240, 4], [250, 2], [262, .5], [668, .5], [672, 8], [690, 15], [700, 10], [715, 12, 13], [745, 12], [750, 3], [757, 2], [765, 8], [785, 13], [793, 9], [798, 1], [805, 1], [818, 8], [850, 11], [870, 12], [888, 9], [890, 5], [898, 11], [903, 3], [910, 1], [918, 1], [922, 6], [940, 6], [953, 12, 13], [958, 10]]],
  [880, [[0, 10], [30, 8], [55, 6], [58, 1], [63, 8], [78, 16, 14], [90, 12], [95, 2], [100, 1], [120, 1], [128, 6], [135, 11], [150, 12], [178, 13, 14], [205, 9], [215, 4], [222, 7], [245, 8], [265, 4], [272, .7], [302, .7], [306, 10], [318, 3], [330, 11], [360, 12], [400, 9], [445, 5], [455, 9], [463, 14], [468, 3], [480, 2], [484, 12], [490, 1], [502, 1], [506, 7], [515, 4], [525, 10], [532, 12], [545, 7], [552, 3], [560, 8], [573, 12], [587, 10], [592, 7], [615, 5], [635, 9], [645, 3], [655, 4], [660, 7], [682, 13], [690, 3], [700, 3], [710, 12], [720, 2], [738, 1], [745, 9], [765, 9], [800, 5], [805, 1], [815, 1], [820, 7], [830, 4], [845, 8], [870, 9], [877, 4], [885, 9], [897, 12], [908, 4], [915, 2], [925, 3], [935, 10], [948, 10]]]
];
const pts = [];
env.forEach(([o, a]) => a.forEach(p => pts.push([o + p[0] / 3 - 246, p[1], p[2] || p[1]])));
const at = (x, k) => {
  let i = 1;
  while (i < pts.length - 1 && pts[i][0] < x) i++;
  const p = pts[i - 1], q = pts[i], t = Math.max(0, Math.min(1, (x - p[0]) / (q[0] - p[0] || 1)));
  return p[k] + (q[k] - p[k]) * t;
};
const mk = (lo, hi) => [1, 2].map(k => x => { const v = at(x, k); return v < 1 ? v : v * (lo + rnd() * (hi - lo)); });
const [u1, d1] = mk(.85, 1.35), [u2, d2] = mk(.45, 1.15);
let flags = '';
[[240, [387, 474, -532, 588, 675, 738, 825, 912, -981]], [560, [-20, -60, -81, 176, 814, 942]], [880, [127, -228, 306, 327, -430, 504, 523, 592, -628, 666, -705, -742, 760, -820, 840, 930]]]
  .forEach(([o, a]) => a.forEach(v => flags += `<path d="M${(o + Math.abs(v) / 3 - 246).toFixed(1)} .3h3.400l-3.400 3.400z" fill="#2f63cc" opacity="${v < 0 ? .6 : 1}"/>`));
h = '<div class="event"><div class="event-name">Audio 3-10</div>';
for (let n = 1; n < 61; n++) h += `<i class="v${n % 4 ? '' : ' maj'}" style="left:${n * BEAT / 4}px"></i>`;
h += `<svg width="950" height="129"><path fill="#3f3f3f" opacity=".5" d="${wave(0, 949, .7, 64.8, u1, d1)}"/><path fill="#3c3c3c" opacity=".9" d="${wave(0, 949, .7, 64.8, u2, d2)}"/>${flags}</svg><i class="edge"></i></div><i class="playline" style="left:667px"></i>`;
$('edCanvas').innerHTML = h;
```
